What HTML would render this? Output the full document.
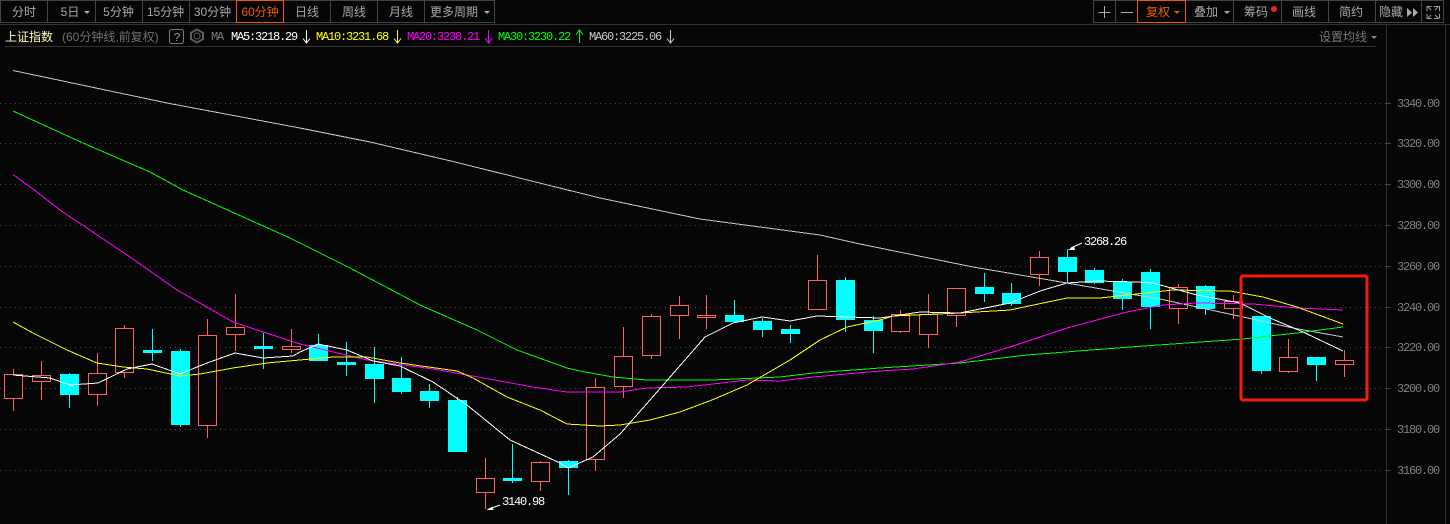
<!DOCTYPE html>
<html><head><meta charset="utf-8"><style>
html,body{margin:0;padding:0;background:#060606;width:1450px;height:524px;overflow:hidden}
svg{display:block}
text{font-family:"Liberation Sans","WenQuanYi Zen Hei","Noto Sans CJK SC",sans-serif;font-size:12px}
.m{font-family:"Liberation Mono",monospace;font-size:12px;letter-spacing:-1.2px}
.t{fill:#a8a8a8;text-anchor:middle}
</style></head><body>
<svg width="1450" height="524" viewBox="0 0 1450 524" xmlns="http://www.w3.org/2000/svg">
<rect width="1450" height="524" fill="#060606"/>
<g shape-rendering="crispEdges" fill="none">
<path d="M0 24.500H1450M5 46.500H1376M1386.500 24V524M1445.500 24V524" stroke="#333"/>
<path d="M0.500 0.500H494.500V22.500H0.500ZM47.500 0V22M95.500 0V22M142.500 0V22M189.500 0V22M330.500 0V22M377.500 0V22M424.500 0V22" stroke="#444"/>
<path d="M1093.500 0.500H1443.500V22.500H1093.500ZM1115.500 0V22M1233.500 0V22M1281.500 0V22M1328.500 0V22M1375.500 0V22M1421.500 0V22" stroke="#444"/>
<rect x="236.500" y="0.500" width="47" height="22" stroke="#f05a00" fill="#060606"/>
<rect x="1137.500" y="0.500" width="48" height="22" stroke="#f05a00" fill="#060606"/>
<path d="M0 103.500H1386M0 143.500H1386M0 184.500H1386M0 225.500H1386M0 266.500H1386M0 307.500H1386M0 347.500H1386M0 388.500H1386M0 429.500H1386M0 470.500H1386" stroke="#4a4a4a" stroke-dasharray="1 4"/>
<path d="M1386 103.500H1391M1386 143.500H1391M1386 184.500H1391M1386 225.500H1391M1386 266.500H1391M1386 307.500H1391M1386 347.500H1391M1386 388.500H1391M1386 429.500H1391M1386 470.500H1391" stroke="#444"/>
</g>
<g>
<text class="t" x="24" y="16">分时</text>
<text class="t" x="70" y="16">5日</text>
<text class="t" x="118.500" y="16">5分钟</text>
<text class="t" x="165.500" y="16">15分钟</text>
<text class="t" x="212.500" y="16">30分钟</text>
<text x="260" y="16" text-anchor="middle" fill="#f05a00">60分钟</text>
<text class="t" x="307" y="16">日线</text>
<text class="t" x="354" y="16">周线</text>
<text class="t" x="401" y="16">月线</text>
<text class="t" x="454" y="16">更多周期</text>
<path d="M84 11h6l-3 3zM484 11h6l-3 3zM1224 11h6l-3 3z" fill="#a8a8a8"/>
<path d="M1174 11h6l-3 3z" fill="#f05a00"/>
<path d="M1371 36h6l-3 3z" fill="#888"/>
<path d="M1104.500 6V18M1098.500 12.500H1110.500M1121 12.500H1133" stroke="#aaa" shape-rendering="crispEdges" fill="none"/>
<text x="1158" y="16" text-anchor="middle" fill="#f05a00">复权</text>
<text class="t" x="1206" y="16">叠加</text>
<text class="t" x="1256" y="16">筹码</text>
<circle cx="1274" cy="9" r="3" fill="#f02020"/>
<text class="t" x="1304" y="16">画线</text>
<text class="t" x="1351" y="16">简约</text>
<text class="t" x="1391" y="16">隐藏</text>
<path d="M1407 8l5 4.500-5 4.500zM1413 8l5 4.500-5 4.500z" fill="#aaa"/>
<path d="M1427 11V6.500H1431.500M1439 6.500H1433.500M1427 14V18.500H1431.500M1439 18.500H1434M1439.500 6V11M1439.500 14V18.500M1428 7l3 3M1438 7l-3 3M1428 18l3-3M1438 18l-3-3" stroke="#999" fill="none"/>
<text x="5" y="41" fill="#ffffc0">上证指数</text>
<text x="62" y="41" fill="#707070">(60分钟线,前复权)</text>
<rect x="169.500" y="29.500" width="14" height="14" rx="2" stroke="#777" fill="none"/>
<text x="176.500" y="41" text-anchor="middle" fill="#999" class="m">?</text>
<path d="M197 29.500l6 3.300v6.400l-6 3.300-6-3.300v-6.400z" stroke="#5c5c5c" stroke-width="2" fill="none"/>
<circle cx="197" cy="36" r="3" stroke="#5c5c5c" fill="none"/>
<text class="m" x="211" y="40" fill="#777">MA</text>
<text class="m" x="231" y="40" fill="#fff">MA5:3218.29</text>
<text class="m" x="316" y="40" fill="#ff0">MA10:3231.68</text>
<text class="m" x="407" y="40" fill="#f0f">MA20:3238.21</text>
<text class="m" x="498" y="40" fill="#0f0">MA30:3230.22</text>
<text class="m" x="589" y="40" fill="#c8c8c8">MA60:3225.06</text>
<path d="M306.500 30V43M303 38.500L306.500 43L310 38.500" stroke="#fff" fill="none"/>
<path d="M397.500 30V43M394 38.500L397.500 43L401 38.500" stroke="#ff0" fill="none"/>
<path d="M488.500 30V43M485 38.500L488.500 43L492 38.500" stroke="#f0f" fill="none"/>
<path d="M579.500 30V43M576 34.500L579.500 30L583 34.500" stroke="#0f0" fill="none"/>
<path d="M670.500 30V43M667 38.500L670.500 43L674 38.500" stroke="#c8c8c8" fill="none"/>
<text x="1319" y="41" fill="#777">设置均线</text>
</g>
<g fill="#808080">
<text class="m" x="1397" y="107">3340.00</text>
<text class="m" x="1397" y="147">3320.00</text>
<text class="m" x="1397" y="188">3300.00</text>
<text class="m" x="1397" y="229">3280.00</text>
<text class="m" x="1397" y="270">3260.00</text>
<text class="m" x="1397" y="311">3240.00</text>
<text class="m" x="1397" y="351">3220.00</text>
<text class="m" x="1397" y="392">3200.00</text>
<text class="m" x="1397" y="433">3180.00</text>
<text class="m" x="1397" y="474">3160.00</text>
</g>
<g shape-rendering="crispEdges">
<path fill="none" stroke="#ff5f5f" d="M13.500 369V411M41.500 361V400M97.500 353V406M124.500 325V378M207.500 319V438M235.500 294V351M291.500 329V353M485.500 458V509M540.500 461V491M595.500 378V471M623.500 327V398M651.500 314V359M679.500 296V339M706.500 295V329M817.500 255V309M900.500 310V333M928.500 294V348M956.500 288V327M1039.500 251V286M1178.500 284V324M1233.500 295V319M1288.500 339V373M1344.500 350V377"/>
<path fill="none" stroke="#00ffff" d="M69.500 373V408M152.500 329V361M180.500 349V427M263.500 333V369M318.500 334V361M346.500 342V376M374.500 347V403M401.500 357V394M429.500 384V408M457.500 397V451M512.500 444V483M568.500 460V495M734.500 300V323M762.500 318V337M790.500 325V343M845.500 277V332M873.500 316V353M984.500 273V302M1011.500 283V306M1067.500 249V283M1094.500 268V284M1122.500 279V310M1150.500 269V329M1205.500 285V315M1261.500 316V374M1316.500 357V381"/>
<g fill="#060606" stroke="#ff5f5f">
<rect x="4.500" y="374.500" width="18" height="24"/>
<rect x="32.500" y="375.500" width="18" height="6"/>
<rect x="88.500" y="373.500" width="18" height="21"/>
<rect x="115.500" y="328.500" width="18" height="44"/>
<rect x="198.500" y="335.500" width="18" height="90"/>
<rect x="226.500" y="327.500" width="18" height="7"/>
<rect x="282.500" y="346.500" width="18" height="3"/>
<rect x="476.500" y="478.500" width="18" height="14"/>
<rect x="531.500" y="462.500" width="18" height="19"/>
<rect x="586.500" y="387.500" width="18" height="72"/>
<rect x="614.500" y="356.500" width="18" height="30"/>
<rect x="642.500" y="316.500" width="18" height="39"/>
<rect x="670.500" y="305.500" width="18" height="10"/>
<rect x="697.500" y="315.500" width="18" height="2"/>
<rect x="808.500" y="280.500" width="18" height="29"/>
<rect x="891.500" y="314.500" width="18" height="17"/>
<rect x="919.500" y="314.500" width="18" height="20"/>
<rect x="947.500" y="288.500" width="18" height="27"/>
<rect x="1030.500" y="257.500" width="18" height="17"/>
<rect x="1169.500" y="287.500" width="18" height="21"/>
<rect x="1224.500" y="301.500" width="18" height="7"/>
<rect x="1279.500" y="357.500" width="18" height="14"/>
<rect x="1335.500" y="360.500" width="18" height="4"/>
</g>
<g fill="#00ffff">
<rect x="60" y="374" width="19" height="21"/>
<rect x="143" y="350" width="19" height="3"/>
<rect x="171" y="351" width="19" height="74"/>
<rect x="254" y="346" width="19" height="3"/>
<rect x="309" y="345" width="19" height="16"/>
<rect x="337" y="362" width="19" height="3"/>
<rect x="365" y="364" width="19" height="15"/>
<rect x="392" y="378" width="19" height="14"/>
<rect x="420" y="391" width="19" height="10"/>
<rect x="448" y="400" width="19" height="52"/>
<rect x="503" y="478" width="19" height="3"/>
<rect x="559" y="461" width="19" height="7"/>
<rect x="725" y="315" width="19" height="7"/>
<rect x="753" y="321" width="19" height="9"/>
<rect x="781" y="329" width="19" height="5"/>
<rect x="836" y="280" width="19" height="40"/>
<rect x="864" y="320" width="19" height="11"/>
<rect x="975" y="287" width="19" height="7"/>
<rect x="1002" y="293" width="19" height="11"/>
<rect x="1058" y="257" width="19" height="15"/>
<rect x="1085" y="270" width="19" height="13"/>
<rect x="1113" y="282" width="19" height="17"/>
<rect x="1141" y="272" width="19" height="35"/>
<rect x="1196" y="286" width="19" height="23"/>
<rect x="1252" y="316" width="19" height="55"/>
<rect x="1307" y="357" width="19" height="8"/>
</g>
</g>
<g fill="none" stroke-width="1" shape-rendering="crispEdges">
<polyline stroke="#c8c8c8" points="13,70.500 167,103 300,128 370,142 455,162 600,198 700,219 820,235 860,244 973,267 1067,283 1130,294 1160,299 1243,317 1293,328 1343,337"/>
<polyline stroke="#00ff00" points="13,111 83,143 150,172 183,190 290,238 350,268 420,305 477,330 517,350 567,368 580,371 613,377 647,380 713,380 780,377 813,373 880,368 960,363 1027,355 1130,347 1243,339 1297,333 1343,327"/>
<polyline stroke="#ff00ff" points="13,174.500 33,189 60,210 130,257 177,290 233,322 300,344 367,360 433,369 467,375 533,387 567,392 620,392 647,388 687,387 713,384 747,380 780,381 813,377 880,371 913,369 960,362 1010,347 1067,328 1127,312 1163,305 1197,303 1253,304 1297,308 1343,310"/>
<polyline stroke="#ffff00" points="13,322 33,333 67,350 97,363 123,367 147,369 180,376 200,374 233,368 267,363 300,360 333,357 367,357 400,363 457,371 473,378 507,397 540,410 567,424 600,426 620,425 650,420 680,412 712,400 747,385 790,360 820,340 847,327 880,320 893,316 960,313 1010,310 1067,298 1100,298 1173,290 1230,291 1263,297 1297,307 1343,324"/>
<polyline stroke="#ffffff" points="13,375 50,378 70,385 98,383 127,369 152,364 180,374 207,363 235,353 263,358 293,356 300,352 318,344 347,350 373,361 400,366 433,382 467,405 510,440 560,463 568,468 593,457 620,434 650,400 705,337 733,323 762,317 790,321 817,316 880,318 920,312 960,313 1010,303 1040,291 1067,283 1097,281 1137,282 1153,283 1197,295 1240,303 1270,318 1303,332 1343,351"/>
</g>
<rect x="1241" y="276" width="126" height="124" rx="2" fill="none" stroke="#f01c0c" stroke-width="3"/>
<text class="m" x="1084" y="245" fill="#fff">3268.26</text>
<path d="M1082 243L1071 248" stroke="#fff" fill="none"/><path d="M1068 250l6-4 1 4z" fill="#fff"/>
<text class="m" x="502" y="505" fill="#fff">3140.98</text>
<path d="M500 505L489 509" stroke="#fff" fill="none"/><path d="M486.500 510l6-3.500 1 3.500z" fill="#fff"/>
</svg>
</body></html>
